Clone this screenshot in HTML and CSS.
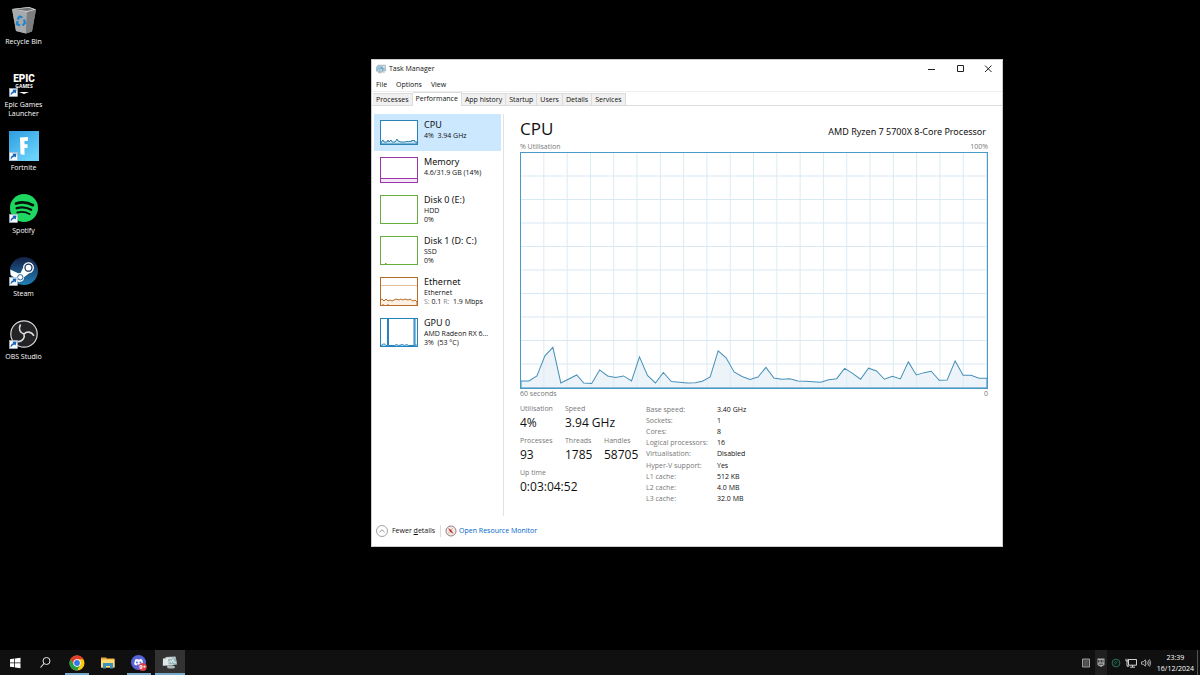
FILE: index.html
```html
<!DOCTYPE html>
<html lang="en-GB">
<head>
<meta charset="utf-8">
<meta name="viewport" content="width=device-width, initial-scale=1">
<title>Task Manager</title>
<link rel="stylesheet" href="styles.css">
</head>
<body>
<svg class="defs" aria-hidden="true">
  <defs>
    <symbol id="shortcut" viewBox="0 0 9 9">
      <rect x="0.5" y="0.5" width="8" height="8" fill="#f4f8fd" stroke="#aab8c8" stroke-width=".6"/>
      <path d="M1.800 7.600C1.300 5.200 2.400 3.600 4.300 3.200L3.400 1.800 7.500 1.500 6.700 5.600 5.600 4.500C4 5 2.600 5.800 1.800 7.600Z" fill="#1763b5"/>
    </symbol>
    <symbol id="monitor" viewBox="0 0 16 14">
      <path d="M3 1h12v9H3z" fill="#dbeaf4" stroke="#76929f"/>
      <path d="M1 3.5h10v7H1z" fill="#b7d9ea" stroke="#7699aa"/>
      <path d="M2 8l2-2 1.500 1.500L8 4.500 9.500 7H14" fill="none" stroke="#257fa9"/>
      <path d="M3 13h7M6 11v2M11 12h3" stroke="#82929a" fill="none"/>
    </symbol>
  </defs>
</svg>

<main class="desktop">
  <nav class="shortcuts" aria-label="Desktop">
    <button class="shortcut">
      <svg class="shortcut-icon" viewBox="0 0 30 30" aria-hidden="true">
        <path d="M3 4L20 2l7 2.500-4 22-6 2-10-2.500z" fill="#888b8d"/>
        <path d="M3 4l15 3-1 21.500-10-2.500z" fill="#a7aaac"/>
        <path d="M18 7l9-2.500-4 22-6 2z" fill="#7c7e80"/>
        <path d="M3 4l17-2 7 2.500L18 7z" fill="#d4d6d7"/>
        <path d="M6 4.200l14-1.400 4.500 1.700-6.500 1.600z" fill="#6e7173"/>
        <g fill="none" stroke="#2386cc" stroke-width="2.300"><path d="M8.500 14.500l2-3 3 .8"/><path d="M15 14.500l1 3.500-2.500 2.500"/><path d="M11 20.500l-3-1.500.6-3"/></g>
      </svg>
      <span>Recycle Bin</span>
    </button>
    <button class="shortcut">
      <svg class="shortcut-icon" viewBox="0 0 30 30" aria-hidden="true">
        <text class="epic-big" x="15" y="14" text-anchor="middle">EPIC</text>
        <text class="epic-small" x="15" y="20" text-anchor="middle">GAMES</text>
        <path d="M10 24h10l-5 2z" fill="#fff"/>
        <use href="#shortcut" x="0" y="20" width="9" height="9"/>
      </svg>
      <span>Epic Games Launcher</span>
    </button>
    <button class="shortcut">
      <svg class="shortcut-icon" viewBox="0 0 30 30" aria-hidden="true">
        <defs><linearGradient id="fortnite" x2=".7" y2="1"><stop stop-color="#2d9be0"/><stop offset="1" stop-color="#6bd3fa"/></linearGradient></defs>
        <path d="M0 0h30v30H0z" fill="url(#fortnite)"/>
        <path d="M11 6.500l8-.5-.3 4-3.200.1v3.100h3v3.900h-3V24l-4-.7z" fill="#fff"/>
        <use href="#shortcut" x="0" y="21" width="9" height="9"/>
      </svg>
      <span>Fortnite</span>
    </button>
    <button class="shortcut">
      <svg class="shortcut-icon" viewBox="0 0 30 30" aria-hidden="true">
        <circle cx="15" cy="14" r="14" fill="#1ed760"/>
        <g fill="none" stroke="#07120a" stroke-linecap="round"><path d="M7 9.500c6-1.800 12-1.100 17 1.700" stroke-width="2.700"/><path d="M7.700 14.200c5-1.400 10-.9 14.500 1.600" stroke-width="2.300"/><path d="M8.300 18.500c4.500-1.100 8.500-.7 12.200 1.500" stroke-width="1.900"/></g>
        <use href="#shortcut" x="0" y="20" width="9" height="9"/>
      </svg>
      <span>Spotify</span>
    </button>
    <button class="shortcut">
      <svg class="shortcut-icon" viewBox="0 0 30 30" aria-hidden="true">
        <defs><linearGradient id="steam" x2="0" y2="1"><stop stop-color="#142044"/><stop offset="1" stop-color="#237fb7"/></linearGradient></defs>
        <circle cx="15" cy="14" r="14" fill="url(#steam)"/>
        <path d="M1.200 12.500l8 3.800 2.300-.3 2.500-5a5.500 5.500 0 1 1 6.200 5.200l-5.200 4.100a4.200 4.200 0 0 1-8.300 1.200L1.700 18z" fill="#fff"/>
        <circle cx="19.500" cy="10.700" r="3.500" fill="#fff" stroke="#183563" stroke-width="1.300"/>
        <circle cx="11.300" cy="20.300" r="2.700" fill="none" stroke="#24649a" stroke-width="1"/>
        <use href="#shortcut" x="0" y="20" width="9" height="9"/>
      </svg>
      <span>Steam</span>
    </button>
    <button class="shortcut">
      <svg class="shortcut-icon" viewBox="0 0 30 30" aria-hidden="true">
        <circle cx="15" cy="14" r="13.200" fill="#232326" stroke="#d8d8d8" stroke-width="1.200"/>
        <g fill="none" stroke="#e0e0e0" stroke-width="1.600"><path d="M15 14c-4-1-6-5-3.500-9.500"/><path d="M15 14c-4-1-6-5-3.500-9.500" transform="rotate(120 15 14)"/><path d="M15 14c-4-1-6-5-3.500-9.500" transform="rotate(240 15 14)"/></g>
        <use href="#shortcut" x="0" y="20" width="9" height="9"/>
      </svg>
      <span>OBS Studio</span>
    </button>
  </nav>

  <section class="window" aria-label="Task Manager">
    <header class="titlebar">
      <svg class="app-icon" aria-hidden="true"><use href="#monitor"/></svg>
      <h1>Task Manager</h1>
      <div class="window-controls">
        <button aria-label="Minimise"><svg viewBox="0 0 8 8"><path d="M0 4.500h7"/></svg></button>
        <button aria-label="Maximise"><svg viewBox="0 0 8 8"><path d="M1.500.5h6v6h-6z"/></svg></button>
        <button aria-label="Close"><svg viewBox="0 0 8 8"><path d="M1 .5l6.500 6.500M7.500.5L1 7"/></svg></button>
      </div>
    </header>
    <nav class="menu" aria-label="Menu"><button>File</button><button>Options</button><button>View</button></nav>
    <div class="tabs" role="tablist">
      <button role="tab">Processes</button><button role="tab" aria-selected="true" class="active">Performance</button><button role="tab">App history</button><button role="tab">Startup</button><button role="tab">Users</button><button role="tab">Details</button><button role="tab">Services</button>
    </div>

    <div class="content">
      <aside class="resources">
        <button class="resource selected">
          <svg class="thumb thumb-cpu" viewBox="0 0 36 23" preserveAspectRatio="none" aria-hidden="true"><path d="M0 22l1-2 1-1 1 2 3 0 1-2 1 2 1-1 1-1 1 2h3l2-3 1 2 3 1h5l1-1 1 1 2-1 1 1 1-2 1 1 1-1 1 2h2v2H0z"/></svg>
          <span class="resource-text"><strong>CPU</strong><span>4%&nbsp; 3.94 GHz</span></span>
        </button>
        <button class="resource">
          <svg class="thumb thumb-memory" viewBox="0 0 36 24" preserveAspectRatio="none" aria-hidden="true"><path d="M-1 20.500h38V26H-1z"/></svg>
          <span class="resource-text"><strong>Memory</strong><span>4.6/31.9 GB (14%)</span></span>
        </button>
        <button class="resource">
          <svg class="thumb thumb-disk" viewBox="0 0 36 27" aria-hidden="true"></svg>
          <span class="resource-text"><strong>Disk 0 (E:)</strong><span>HDD</span><span>0%</span></span>
        </button>
        <button class="resource">
          <svg class="thumb thumb-disk" viewBox="0 0 36 27" aria-hidden="true"><path d="M4 26.500h1.500"/></svg>
          <span class="resource-text"><strong>Disk 1 (D: C:)</strong><span>SSD</span><span>0%</span></span>
        </button>
        <button class="resource">
          <svg class="thumb thumb-network" viewBox="0 0 36 27" preserveAspectRatio="none" aria-hidden="true"><path class="faint" d="M0 7.500h36"/><path d="M-1 22l2-1 2 2 2-2 2 2 2-1 2 1 2-1 2-1 3 1 2-1 2 1 2-1 3 1 2-1 3 2 2-1 2 2v5H-1z"/><path d="M2 27v-1M7 27v-1"/></svg>
          <span class="resource-text"><strong>Ethernet</strong><span>Ethernet</span><span><i>S:</i> 0.1 <i>R:</i>&nbsp; 1.9 Mbps</span></span>
        </button>
        <button class="resource">
          <svg class="thumb thumb-gpu" viewBox="0 0 36 27" preserveAspectRatio="none" aria-hidden="true"><path d="M0 26.500l2-1 1-1 2 2h1.500V0h1v26.500h6l2-1 2 1 4-1 2 1 2-1 2 1h5.500V0h1v26.500l1-1v3H0z"/></svg>
          <span class="resource-text"><strong>GPU 0</strong><span>AMD Radeon RX 6...</span><span>3%&nbsp; (53 °C)</span></span>
        </button>
      </aside>

      <article class="detail">
        <header class="detail-head"><h2>CPU</h2><span>AMD Ryzen 7 5700X 8-Core Processor</span></header>
        <div class="scale"><span>% Utilisation</span><span>100%</span></div>
        <svg class="chart" viewBox="0 0 468 234" preserveAspectRatio="none" role="img" aria-label="CPU utilisation over 60 seconds">
          <defs><pattern id="grid" width="23.4" height="23.4" patternUnits="userSpaceOnUse"><path d="M23 0v23.400M0 23h23.400" fill="none" stroke="#d9e9f3"/></pattern></defs>
          <path d="M0 0h468v234H0z" fill="url(#grid)"/>
          <path class="usage" d="M0 227L8 227 16 222 24 202 32 193.500 40 229 48 225 56 221 63 229 71 229.500 79 216 87 222 95 223.500 103 222 111 227 119 203 127 221.500 135 229 143 218.500 151 227.500 159 228.300 167 229 175 228.700 182 227.300 190 223 198 197 206 204 214 218 222 222.500 230 225.500 238 223 246 213.500 254 224 262 225.300 270 224.700 278 227 286 227.300 293 227.700 301 228.300 309 225.700 317 224.700 325 214.500 333 219.500 341 225.300 349 214.300 357 217 365 225.300 373 222.300 381 225 389 208 397 221 405 218.700 412 217.300 420 226.300 428 226 436 207 444 221.300 452 221.300 460 224.300 468 224.300V234H0z"/>
        </svg>
        <div class="scale"><span>60 seconds</span><span>0</span></div>
        <div class="stats">
          <div class="live">
            <dl><div><dt>Utilisation</dt><dd>4%</dd></div><div class="wide"><dt>Speed</dt><dd>3.94 GHz</dd></div></dl>
            <dl><div><dt>Processes</dt><dd>93</dd></div><div><dt>Threads</dt><dd>1785</dd></div><div><dt>Handles</dt><dd>58705</dd></div></dl>
            <dl><div class="wide"><dt>Up time</dt><dd>0:03:04:52</dd></div></dl>
          </div>
          <table class="specs">
            <tr><th scope="row">Base speed:</th><td>3.40 GHz</td></tr>
            <tr><th scope="row">Sockets:</th><td>1</td></tr>
            <tr><th scope="row">Cores:</th><td>8</td></tr>
            <tr><th scope="row">Logical processors:</th><td>16</td></tr>
            <tr><th scope="row">Virtualisation:</th><td>Disabled</td></tr>
            <tr><th scope="row">Hyper-V support:</th><td>Yes</td></tr>
            <tr><th scope="row">L1 cache:</th><td>512 KB</td></tr>
            <tr><th scope="row">L2 cache:</th><td>4.0 MB</td></tr>
            <tr><th scope="row">L3 cache:</th><td>32.0 MB</td></tr>
          </table>
        </div>
      </article>
    </div>

    <footer class="window-footer">
      <button class="fewer"><svg viewBox="0 0 12 12" aria-hidden="true"><circle cx="6" cy="6" r="5.500" fill="none" stroke="#8b8b8b" stroke-width=".8"/><path d="M3.300 7.300L6 4.700l2.700 2.600" fill="none" stroke="#777" stroke-width=".8"/></svg><span>Fewer <u>d</u>etails</span></button>
      <a class="monitor-link" href="#"><svg viewBox="0 0 12 12" aria-hidden="true"><circle cx="6" cy="6" r="5" fill="#f5e9e6" stroke="#8d8582" stroke-width="1"/><path d="M3 3l3.200 2L8.600 9 5 6.800z" fill="#b92f2a"/><path d="M6 5l2.200-2M3 8h1.500" stroke="#c69690" stroke-width=".7"/></svg>Open Resource Monitor</a>
    </footer>
  </section>
</main>

<footer class="taskbar">
  <nav class="apps" aria-label="Taskbar">
    <button aria-label="Start"><svg viewBox="0 0 16 16"><path d="M3 4.200l4.300-.6v4H3zM8 3.500l5.500-.8v4.900H8zM3 8.300h4.300v4L3 11.700zM8 8.300h5.500v4.900L8 12.400z" fill="#fff"/></svg></button>
    <button aria-label="Search"><svg viewBox="0 0 16 16"><circle cx="8.500" cy="6" r="3.500" fill="none" stroke="#e7e7e7"/><path d="M6 8.500L2.500 12.500" stroke="#e7e7e7" stroke-width="1.100"/></svg></button>
    <button class="running" aria-label="Chrome"><svg viewBox="0 0 16 16"><circle cx="8" cy="8" r="7.500" fill="#fbc70f"/><path d="M1.500 4.250A7.500 7.500 0 0 1 14.500 4.250H8L4.750 9.900z" fill="#e33b2e"/><path d="M1.500 4.250A7.500 7.500 0 0 0 8 15.500l3.250-5.600L8 11.750 4.750 9.900z" fill="#229b4b"/><circle cx="8" cy="8" r="3.700" fill="#fff"/><circle cx="8" cy="8" r="2.900" fill="#3479e6"/></svg></button>
    <button aria-label="File Explorer"><svg viewBox="0 0 16 16"><path d="M1 2.500h5l1 1h7.500v9H1z" fill="#e7a93c"/><path d="M1 4.500h13.500v8H1z" fill="#ffdb72"/><path d="M3 8h10v5.500h-3V11H6v2.500H3z" fill="#3b92bb"/></svg></button>
    <button class="running" aria-label="Discord"><svg viewBox="0 0 16 16"><circle cx="7.500" cy="7.500" r="7.500" fill="#5865d9"/><path d="M4.200 4.600l2-.7.600.7h1.800l.6-.7 2 .7 1 4.600-2.300 1.300-.6-1H6l-.6 1L3 9.200z" fill="#fff"/><circle cx="6" cy="7.500" r="1" fill="#5865d9"/><circle cx="9.400" cy="7.500" r="1" fill="#5865d9"/><circle cx="11.700" cy="12" r="4" fill="#d83f4b"/><text class="badge-text" x="11.700" y="14" text-anchor="middle">9+</text></svg></button>
    <button class="running current" aria-label="Task Manager"><svg viewBox="0 0 16 16"><path d="M3.500 2l10-.5 1.500 8-10 1z" fill="#b9c8ca"/><path d="M1 3.500l9-.7 1.300 7.400-10.500.6z" fill="#e0e8e7"/><path d="M6 4l8-.5.700 5.500-8 .6z" fill="#9ab6bb"/><path d="M7 7.500l1.500-2 1 2 1.500-3 1 3.200 2-.5" fill="none" stroke="#f1fcfc" stroke-width=".8"/><ellipse cx="9" cy="12" rx="4" ry="1.500" fill="#aeb9ba"/></svg></button>
  </nav>
  <div class="tray">
    <svg viewBox="0 0 10 10" aria-label="Tray application"><path d="M1.500 1h7v8h-7z" fill="#444" stroke="#bbb" stroke-width=".8"/><path d="M3 3h4M3 5h4M3 7h4" stroke="#777" stroke-width=".6"/></svg>
    <span class="tray-epic"><svg viewBox="0 0 10 10" aria-label="Epic Games"><path d="M1.500.5h7v6.500L5 9l-3.500-2z" fill="#aaa"/><path d="M2.500 2v2.500M4 2v2.500M5.500 2v2.500M7 2v2.500M2.800 6.200h4.400" stroke="#222" stroke-width=".8"/></svg></span>
    <svg viewBox="0 0 10 10" aria-label="Status"><circle cx="5" cy="5" r="3.900" fill="#101a17" stroke="#277052"/><path d="M3.500 6.500L6.500 3.500M3.300 4.700l1.500-1.500" stroke="#397b60" stroke-width=".7"/></svg>
    <svg class="network" viewBox="0 0 12 10" aria-label="Network"><path d="M3.500 1.500h8v5.700h-8zM7.500 7v2M5 9.200h5M1 .8v2.200h2V.8M2 3v5.200h2" fill="none" stroke="#e5e5e5" stroke-width=".9"/></svg>
    <svg viewBox="0 0 10 10" aria-label="Volume"><path d="M.5 3.800h1.700l2.200-2v6.400l-2.200-2H.5zM5.800 3.300q1.300 1.700 0 3.400M7.200 2.200q2 2.800 0 5.600M8.500 1.300q2.500 3.700 0 7.400" fill="none" stroke="#e1e1e1" stroke-width=".7"/></svg>
    <time datetime="2024-12-16T23:39"><span>23:39</span><span>16/12/2024</span></time>
  </div>
</footer>
</body>
</html>
```
FILE: styles.css
```css
* { box-sizing: border-box; }

body {
  margin: 0;
  min-height: 100vh;
  display: flex;
  flex-direction: column;
  background: #000;
  color: #111;
  font: 7px/10px "Open Sans", "Noto Sans", sans-serif;
}

button {
  padding: 0;
  border: 0;
  background: none;
  color: inherit;
  font: inherit;
}

h1, h2, dl, dd { margin: 0; font-weight: 400; }

.defs { position: absolute; width: 0; height: 0; }

.desktop { flex: 1; position: relative; }

/* Desktop shortcuts */
.shortcuts {
  width: 47px;
  display: grid;
  grid-auto-rows: 63px;
}

.shortcut {
  display: flex;
  flex-direction: column;
  align-items: center;
  gap: 2px;
  padding-top: 5px;
  color: #fff;
  line-height: 9px;
}

.shortcut-icon { width: 30px; height: 30px; flex: none; }
.epic-big { fill: #fff; font: 900 10px Roboto, sans-serif; }
.epic-small { fill: #fff; font: 700 5px "Open Sans", sans-serif; }

/* Task Manager window */
.window {
  position: absolute;
  top: 59px;
  left: 371px;
  right: 197px;
  bottom: 103px;
  display: flex;
  flex-direction: column;
  background: #fff;
  border: 1px solid #ccc;
}

.titlebar {
  display: flex;
  align-items: center;
  height: 18px;
  padding-left: 4px;
  gap: 3px;
}

.titlebar h1 { font-size: 7px; }
.app-icon { width: 10px; height: 10px; }
.window-controls { margin-left: auto; display: flex; }
.window-controls button { width: 28px; height: 18px; display: grid; place-items: center; }
.window-controls svg { width: 8px; height: 8px; fill: none; stroke: #222; stroke-width: 1; }

.menu { display: flex; gap: 9px; height: 13px; padding-left: 4px; align-items: center; }

.tabs {
  display: flex;
  align-items: flex-end;
  height: 15px;
  padding-left: 1px;
  border-top: 1px solid #eee;
  border-bottom: 1px solid #dcdcdc;
}

.tabs button {
  height: 12px;
  padding: 0 3px;
  background: #f0f0f0;
  border: 1px solid #dcdcdc;
  border-left-width: 0;
  border-bottom: 0;
}

.tabs .active { height: 14px; padding-bottom: 1px; background: #fff; margin-bottom: -1px; }

.content { flex: 1; display: flex; padding: 8px 14px 0 2px; }

.resources { width: 130px; padding-right: 2px; border-right: 1px solid #e2e2e2; }

.resource {
  width: 100%;
  display: flex;
  gap: 6px;
  padding: 5px 6px 6px;
  text-align: left;
}

.resource.selected { background: #cce8ff; }

.thumb {
  flex: none;
  width: 38px;
  height: 29px;
  margin-top: 1px;
  background: #fff;
  border: 1px solid currentColor;
  stroke: currentColor;
  stroke-width: 1;
  fill: #f3f8fc;
}

.thumb-cpu { height: 25px; color: #2b83b5; fill: #c9e3f1; }
.thumb-memory { height: 26px; color: #9a35ac; fill: #f3e7f5; }
.thumb-disk { color: #66ad3e; }
.thumb-network { color: #b96b25; fill: #fcf0e4; }
.thumb-network .faint { stroke: #e4bf9e; }
.thumb-gpu { color: #2584bd; fill: #a9d2e9; }

.resource-text { display: flex; flex-direction: column; line-height: 9px; white-space: nowrap; }
.resource-text strong { font: 400 9px/12px "Noto Sans", sans-serif; }
.resource-text i { color: #888; font-style: normal; }

.detail { flex: 1; min-width: 0; padding-left: 16px; display: flex; flex-direction: column; }
.detail-head { display: flex; justify-content: space-between; align-items: baseline; height: 28px; padding-right: 2px; font: 9px/10px "Noto Sans", sans-serif; }
.detail-head h2 { font: 400 17px/30px "Open Sans", sans-serif; }
.scale { display: flex; justify-content: space-between; color: #777; }
.chart { display: block; flex: 1; min-height: 0; width: 100%; border: 1px solid #4b99c7; }
.usage { fill: #dcebf5; fill-opacity: .55; stroke: #458fb8; stroke-width: 1; }

.stats { display: flex; gap: 3px; height: 117px; padding-top: 5px; }
.live { width: 123px; }
.live dl { height: 32px; display: grid; grid-template-columns: 45px 39px 39px; }
.live .wide { grid-column: span 2; }
.live dt { color: #777; }
.live dd { font-size: 12px; line-height: 18px; }
.specs { height: 101px; border-collapse: collapse; }
.specs th { width: 71px; padding: 0; color: #777; font-weight: 400; text-align: left; white-space: nowrap; }
.specs td { padding: 0; white-space: nowrap; }

.window-footer { height: 30px; display: flex; align-items: center; padding-left: 4px; }
.window-footer button, .window-footer a { display: flex; align-items: center; gap: 4px; }
.window-footer svg { width: 12px; height: 12px; }
.fewer { padding-right: 5px; border-right: 1px solid #ddd; }
.window-footer .monitor-link { gap: 2px; padding-left: 4px; color: #0066cc; text-decoration: none; }

/* Taskbar */
.taskbar { height: 25px; display: flex; justify-content: space-between; background: #101010; color: #fff; }
.apps { display: flex; gap: 1px; }
.apps button { width: 30px; height: 25px; display: grid; place-items: center; position: relative; }
.apps svg { width: 16px; height: 16px; }
.apps .running::after { content: ""; position: absolute; left: 3px; right: 3px; bottom: 0; height: 2px; background: #76a9c9; }
.apps .current { background: #333; }
.apps .current::after { left: 0; right: 0; }
.badge-text { fill: #fff; font: 700 6px "Open Sans", sans-serif; }

.tray { display: flex; align-items: center; gap: 4px; padding-right: 3px; border-right: 1px solid #555; margin-right: 2px; }
.tray svg { width: 10px; height: 10px; display: block; }
.tray .network { width: 12px; }
.tray-epic { height: 25px; padding: 0 1px; display: grid; place-items: center; background: #202020; }
.tray time { display: grid; justify-items: center; line-height: 11px; margin-left: 2px; }
```
